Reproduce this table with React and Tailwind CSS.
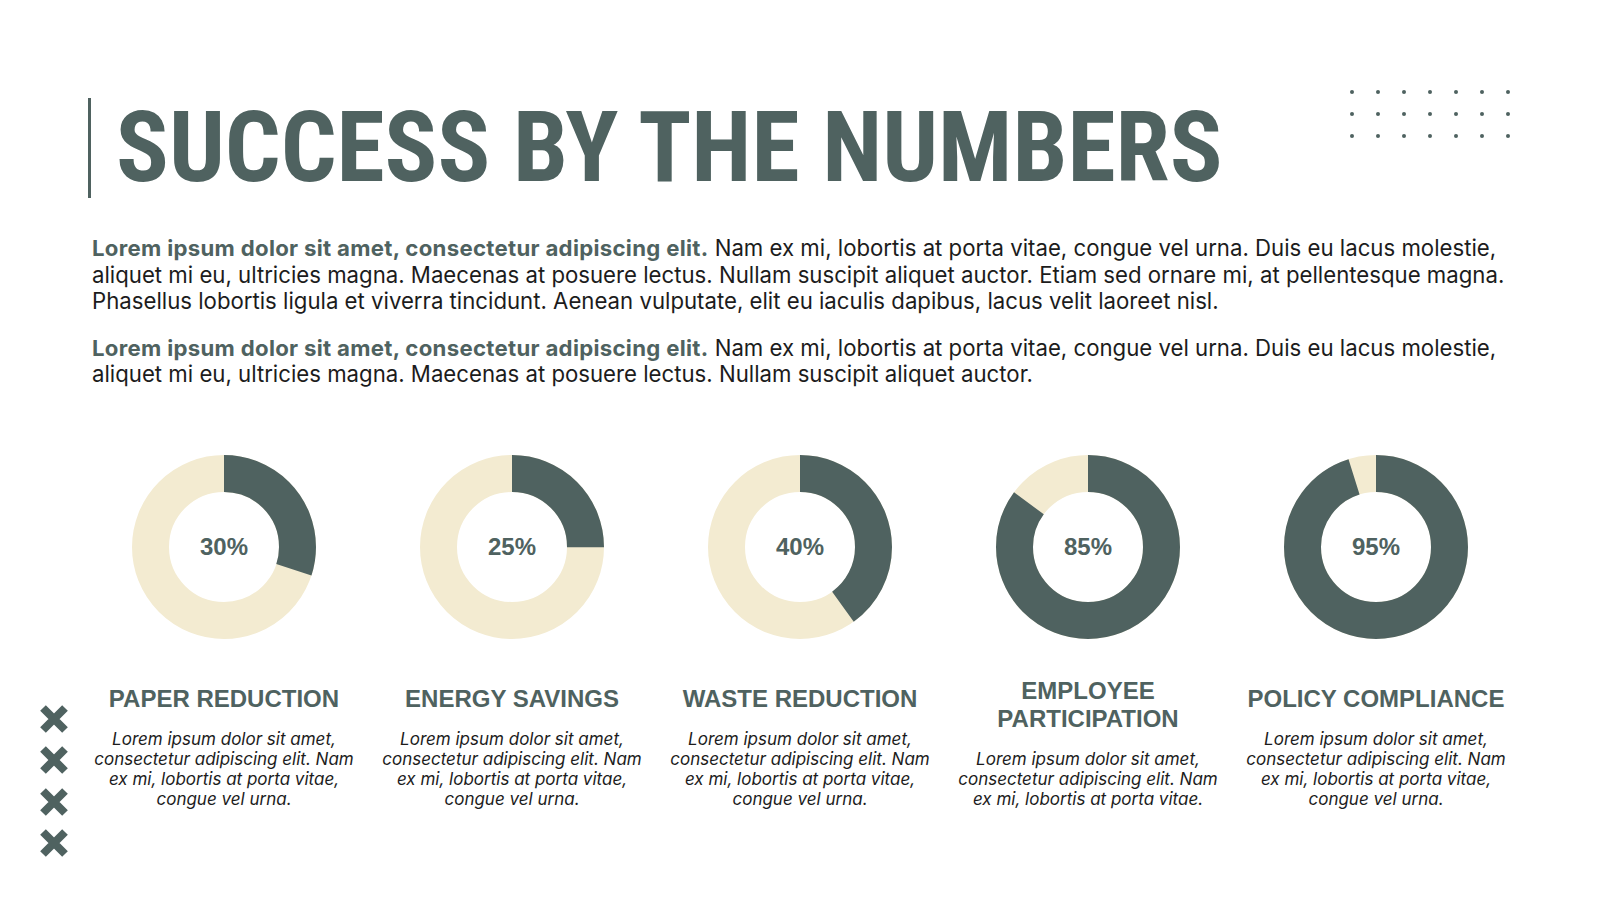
import React from 'react';

const stats = [
  { value: 30, title: ['PAPER REDUCTION'], lines: ['Lorem ipsum dolor sit amet,', 'consectetur adipiscing elit. Nam', 'ex mi, lobortis at porta vitae,', 'congue vel urna.'] },
  { value: 25, title: ['ENERGY SAVINGS'], lines: ['Lorem ipsum dolor sit amet,', 'consectetur adipiscing elit. Nam', 'ex mi, lobortis at porta vitae,', 'congue vel urna.'] },
  { value: 40, title: ['WASTE REDUCTION'], lines: ['Lorem ipsum dolor sit amet,', 'consectetur adipiscing elit. Nam', 'ex mi, lobortis at porta vitae,', 'congue vel urna.'] },
  { value: 85, title: ['EMPLOYEE', 'PARTICIPATION'], lines: ['Lorem ipsum dolor sit amet,', 'consectetur adipiscing elit. Nam', 'ex mi, lobortis at porta vitae.'] },
  { value: 95, title: ['POLICY COMPLIANCE'], lines: ['Lorem ipsum dolor sit amet,', 'consectetur adipiscing elit. Nam', 'ex mi, lobortis at porta vitae,', 'congue vel urna.'] },
];

function Donut({ value }) {
  const r = 73.5;
  const c = 2 * Math.PI * r;
  return (
    <div className="relative w-[184px] h-[184px]">
      <svg width="184" height="184" viewBox="0 0 184 184" className="block">
        <circle cx="92" cy="92" r={r} fill="none" stroke="#f3ebd1" strokeWidth="37" />
        <circle
          cx="92"
          cy="92"
          r={r}
          fill="none"
          stroke="#4f6260"
          strokeWidth="37"
          strokeDasharray={`${(c * value) / 100} ${c}`}
          transform="rotate(-90 92 92)"
        />
      </svg>
      <div className="absolute inset-0 flex items-center justify-center text-[24px] font-bold text-[#4f6260]">
        {value}%
      </div>
    </div>
  );
}

function Cross() {
  return (
    <svg width="28" height="28" viewBox="0 0 28 28" className="block">
      <path d="M3 3 L25 25 M25 3 L3 25" stroke="#4f6260" strokeWidth="8" strokeLinecap="butt" />
    </svg>
  );
}

export default function App() {
  return (
    <div className="w-[1600px] h-[900px] bg-white overflow-hidden font-['Liberation_Sans',Arial,sans-serif]">
      {/* header */}
      <div className="flex justify-between items-start pt-[90px] pl-[88px] pr-[90px]">
        <div className="mt-[8px] h-[100px] border-l-[3px] border-[#4f6260] pl-[25px]">
          <h1 className="mt-[1px] text-[98px] leading-none font-bold text-[#4f6260] whitespace-nowrap font-['Liberation_Sans_Narrow','Roboto_Condensed','DejaVu_Sans_Condensed',sans-serif]">
            SUCCESS BY THE NUMBERS
          </h1>
        </div>
        <div className="grid grid-cols-7 gap-x-[22px] gap-y-[18px]">
          {Array.from({ length: 21 }).map((_, i) => (
            <span key={i} className="block w-[4px] h-[4px] rounded-full bg-[#4f6260]" />
          ))}
        </div>
      </div>

      {/* intro */}
      <div className="mt-[37px] pl-[92px] font-['Inter',sans-serif] text-[22.2px] leading-[26.5px] text-[#1c1c1c] whitespace-nowrap">
        <p>
          <span className="font-bold tracking-[0.3px] text-[#4f6260]">Lorem ipsum dolor sit amet, consectetur adipiscing elit.</span> Nam ex mi, lobortis at porta vitae, congue vel urna. Duis eu lacus molestie,
          <br />
          aliquet mi eu, ultricies magna. Maecenas at posuere lectus. Nullam suscipit aliquet auctor. Etiam sed ornare mi, at pellentesque magna.
          <br />
          Phasellus lobortis ligula et viverra tincidunt. Aenean vulputate, elit eu iaculis dapibus, lacus velit laoreet nisl.
        </p>
        <p className="mt-5">
          <span className="font-bold tracking-[0.3px] text-[#4f6260]">Lorem ipsum dolor sit amet, consectetur adipiscing elit.</span> Nam ex mi, lobortis at porta vitae, congue vel urna. Duis eu lacus molestie,
          <br />
          aliquet mi eu, ultricies magna. Maecenas at posuere lectus. Nullam suscipit aliquet auctor.
        </p>
      </div>

      {/* stats */}
      <div className="mt-[67px] flex items-start">
        <div className="ml-[40px] mt-[250px] flex flex-col gap-[13.5px]">
          <Cross />
          <Cross />
          <Cross />
          <Cross />
        </div>
        <div className="ml-[12px] grid grid-cols-5 w-[1440px]">
          {stats.map((s) => (
            <div key={s.value} className="flex flex-col items-center">
              <Donut value={s.value} />
              <div className="h-[170px] flex flex-col justify-end items-center text-center">
                <h2 className="text-[24px] leading-[28px] font-bold text-[#4f6260]">
                  {s.title.map((t, i) => (
                    <span key={i} className="block">{t}</span>
                  ))}
                </h2>
                <p className="mt-[16px] font-['Inter',sans-serif] text-[17px] leading-[20px] italic text-[#1c1c1c]">
                  {s.lines.map((l, i) => (
                    <span key={i} className="block">{l}</span>
                  ))}
                </p>
              </div>
            </div>
          ))}
        </div>
      </div>
    </div>
  );
}
